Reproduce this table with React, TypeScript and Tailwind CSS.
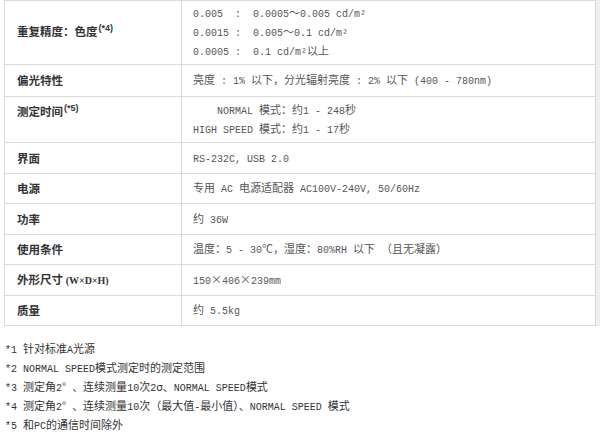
import React from 'react';

type Row = {
  label: React.ReactNode;
  lines: string[];
  h: string;
  labelTop?: boolean;
};

// ASCII runs get the narrow mono face, everything else stays CJK
const Mixed = ({ text }: { text: string }): JSX.Element => {
  const parts = text.match(/[\x20-\x7E²]+|[^\x20-\x7E²]+/g) ?? [];
  return (
    <>
      {parts.map((p, i) =>
        /^[\x20-\x7E²]/.test(p) ? (
          <span key={i} className="font-['Liberation_Mono',monospace] text-[10px]">
            {p}
          </span>
        ) : (
          <span key={i}>{p}</span>
        )
      )}
    </>
  );
};

const Sup = ({ children }: { children: React.ReactNode }): JSX.Element => (
  <span className="relative -top-[5px] ml-[1px] font-['Liberation_Sans',sans-serif] text-[9px] font-bold">
    {children}
  </span>
);

const rows: Row[] = [
  {
    label: (
      <>
        重复精度：色度<Sup>(*4)</Sup>
      </>
    ),
    lines: ['0.005  :  0.0005～0.005 cd/m²', '0.0015 :  0.005～0.1 cd/m²', '0.0005 :  0.1 cd/m²以上'],
    h: 'h-[64px]',
  },
  {
    label: '偏光特性',
    lines: ['亮度 : 1% 以下，分光辐射亮度 : 2% 以下 (400 - 780nm)'],
    h: 'h-[32px]',
  },
  {
    label: (
      <>
        测定时间<Sup>(*5)</Sup>
      </>
    ),
    lines: ['    NORMAL 模式：约1 - 248秒', 'HIGH SPEED 模式：约1 - 17秒'],
    h: 'h-[46px]',
    labelTop: true,
  },
  { label: '界面', lines: ['RS-232C, USB 2.0'], h: 'h-[31px]' },
  { label: '电源', lines: ['专用 AC 电源适配器 AC100V-240V, 50/60Hz'], h: 'h-[30px]' },
  { label: '功率', lines: ['约 36W'], h: 'h-[31px]' },
  { label: '使用条件', lines: ['温度：5 - 30℃，湿度：80%RH 以下 （且无凝露）'], h: 'h-[30px]' },
  {
    label: (
      <>
        外形尺寸 <span className="font-['Liberation_Serif',serif] text-[10px] font-bold">(W×D×H)</span>
      </>
    ),
    lines: ['150×406×239mm'],
    h: 'h-[31px]',
  },
  { label: '质量', lines: ['约 5.5kg'], h: 'h-[30px]' },
];

const notes = [
  '*1 针对标准A光源',
  '*2 NORMAL SPEED模式测定时的测定范围',
  '*3 测定角2° 、连续测量10次2σ、NORMAL SPEED模式',
  '*4 测定角2° 、连续测量10次（最大值-最小值）、NORMAL SPEED 模式',
  '*5 和PC的通信时间除外',
];

export default function App(): JSX.Element {
  return (
    <div className="h-[441px] w-[600px] overflow-hidden bg-white font-['Noto_Sans_CJK_SC',sans-serif] text-[11px]">
      {/* 规格表 */}
      <div className="flex pl-[4px]">
        <div className="flex-1 border border-b-0 border-[#d9d9d9]">
          {rows.map((row, i) => (
            <div key={i} className={`flex border-b border-[#d9d9d9] ${row.h}`}>
              <div
                className={`flex w-[177px] shrink-0 border-r border-[#d9d9d9] pl-[12px] text-[11.5px] font-bold leading-[17px] text-[#333] ${
                  row.labelTop ? 'items-start pt-[6px]' : 'items-center'
                }`}
              >
                <span>{row.label}</span>
              </div>
              <div className="flex flex-col justify-center pl-[11px] leading-[17px] text-[#555]">
                {row.lines.map((line, j) => (
                  <div key={j} className="whitespace-pre">
                    <Mixed text={line} />
                  </div>
                ))}
              </div>
            </div>
          ))}
        </div>
        <div className="w-[4px] bg-[#efefef]" />
      </div>

      {/* 注释 */}
      <div className="mt-[14px] pl-[5px] leading-[17px] text-[#333]">
        {notes.map((n, i) => (
          <div key={i} className="whitespace-pre">
            <Mixed text={n} />
          </div>
        ))}
      </div>
    </div>
  );
}
